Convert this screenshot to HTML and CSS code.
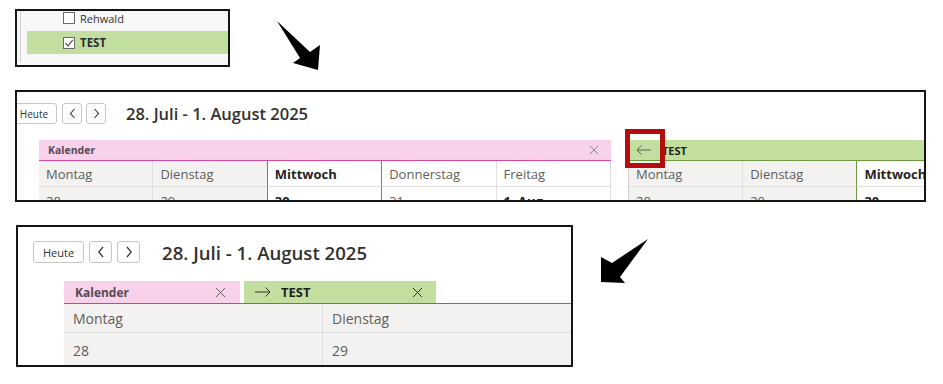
FILE: index.html
```html
<!DOCTYPE html>
<html lang="de">
<head>
<meta charset="utf-8">
<title>Kalender</title>
<link rel="stylesheet" href="styles.css">
</head>
<body>

<div class="shot shot1">
  <div class="nav">
    <div class="list">
      <div class="row"><span class="cb"></span><span>Rehwald</span></div>
      <div class="row sel"><span class="cb"><svg width="10" height="10" viewBox="0 0 10 10"><path d="M1.5 5.2 L4 7.8 L8.8 1.8" fill="none" stroke="#444" stroke-width="1.1"/></svg></span><span class="b">TEST</span></div>
    </div>
  </div>
</div>

<svg class="bigarrow a1" width="56" height="60" viewBox="0 0 56 60"><polygon points="7,6 40,37 50,30 48,55 23,48 30,43" fill="#000"/></svg>

<div class="shot shot2">
  <div class="toolbar t2">
    <button class="btn today">Heute</button>
    <button class="btn nb"><svg width="7" height="11" viewBox="0 0 7 11"><path d="M5.5 1 L1.5 5.5 L5.5 10" fill="none" stroke="#323130" stroke-width="1.1"/></svg></button>
    <button class="btn nb"><svg width="7" height="11" viewBox="0 0 7 11"><path d="M1.5 1 L5.5 5.5 L1.5 10" fill="none" stroke="#323130" stroke-width="1.1"/></svg></button>
    <h1 class="title">28. Juli - 1. August 2025</h1>
  </div>
  <div class="cals">
    <div class="cal pinkcal">
      <div class="bar"><span class="bname">Kalender</span><svg width="10" height="10" viewBox="0 0 10 10"><path d="M1 1L9 9M9 1L1 9" stroke="#8a8886" stroke-width="1"/></svg></div>
      <div class="grid5">
        <div class="c past">Montag</div>
        <div class="c past">Dienstag</div>
        <div class="c now b">Mittwoch</div>
        <div class="c after">Donnerstag</div>
        <div class="c">Freitag</div>
        <div class="d past">28</div>
        <div class="d past">29</div>
        <div class="d now b">30</div>
        <div class="d after">31</div>
        <div class="d b">1. Aug</div>
      </div>
    </div>
    <div class="cal greencal">
      <div class="bar"><svg width="16" height="10" viewBox="0 0 16 10"><path d="M15 5H1M5.5 0.5L1 5L5.5 9.5" fill="none" stroke="#605e5c" stroke-width="1"/></svg><span class="bname">TEST</span></div>
      <div class="grid5">
        <div class="c past">Montag</div>
        <div class="c past">Dienstag</div>
        <div class="c now b">Mittwoch</div>
        <div class="c after">Donnerstag</div>
        <div class="c">Freitag</div>
        <div class="d past">28</div>
        <div class="d past">29</div>
        <div class="d now b">30</div>
        <div class="d after">31</div>
        <div class="d b">1. Aug</div>
      </div>
    </div>
  </div>
  <div class="mark"></div>
</div>

<svg class="bigarrow a2" width="60" height="55" viewBox="0 0 60 55"><polygon points="53,5 17,29 6,23 6,48 30,49 25,43" fill="#000"/></svg>

<div class="shot shot3">
  <div class="toolbar t3">
    <button class="btn today">Heute</button>
    <button class="btn nb"><svg width="8" height="12" viewBox="0 0 8 12"><path d="M6 1 L1.8 6 L6 11" fill="none" stroke="#323130" stroke-width="1.2"/></svg></button>
    <button class="btn nb"><svg width="8" height="12" viewBox="0 0 8 12"><path d="M2 1 L6.2 6 L2 11" fill="none" stroke="#323130" stroke-width="1.2"/></svg></button>
    <h1 class="title">28. Juli - 1. August 2025</h1>
  </div>
  <div class="tabs">
    <div class="tab pinktab"><span class="bname">Kalender</span><svg width="11" height="11" viewBox="0 0 11 11"><path d="M1 1L10 10M10 1L1 10" stroke="#605e5c" stroke-width="1"/></svg></div>
    <div class="tab greentab"><span class="tl"><svg width="16" height="10" viewBox="0 0 16 10"><path d="M0 5H15M10.5 0.5L15 5L10.5 9.5" fill="none" stroke="#323130" stroke-width="1"/></svg><span class="bname">TEST</span></span><svg width="11" height="11" viewBox="0 0 11 11"><path d="M1 1L10 10M10 1L1 10" stroke="#323130" stroke-width="1"/></svg></div>
  </div>
  <div class="grid2">
    <div class="c">Montag</div>
    <div class="c">Dienstag</div>
    <div class="d">28</div>
    <div class="d">29</div>
  </div>
</div>

</body>
</html>
```

FILE: styles.css
```css
* { box-sizing: border-box; margin: 0; padding: 0; }
body {
  margin: 0;
  width: 943px;
  height: 384px;
  position: relative;
  overflow: hidden;
  background: #fff;
  font-family: "Open Sans", "Noto Sans", sans-serif;
  color: #323130;
}
.b { font-weight: 700; }
.shot {
  position: absolute;
  border: 2px solid #151515;
  background: #fff;
  overflow: hidden;
}
.shot1 { left: 15px; top: 9px; width: 215px; height: 58px; background: #f7f7f7; padding-left: 3px; }
.shot2 { left: 15px; top: 90px; width: 911px; height: 112px; padding-top: 11px; }
.shot3 { left: 16px; top: 225px; width: 557px; height: 142px; padding: 14px 0 0 15px; }

.bigarrow { position: absolute; }
.a1 { left: 270px; top: 15px; }
.a2 { left: 595px; top: 234px; }

/* panel 1 */
.nav { height: 100%; border-left: 1px solid #d2d0ce; padding-left: 6px; }
.list { margin-top: -3px; }
.row {
  height: 23px;
  display: flex;
  align-items: center;
  gap: 5px;
  padding-left: 36px;
  font-size: 11px;
  color: #323130;
}
.row:first-child { padding-bottom: 3px; }
.row.sel { background: #c3dfa0; font-size: 11.5px; color: #2b2b2b; }
.cb {
  width: 12px;
  height: 12px;
  border: 1px solid #6b6a68;
  background: #fff;
  display: flex;
  align-items: center;
  justify-content: center;
}

/* toolbars */
.toolbar { display: flex; align-items: center; }
.btn {
  background: #fff;
  border: 1px solid #c8c6c4;
  border-radius: 3px;
  font-family: inherit;
  color: #323130;
  display: flex;
  align-items: center;
  justify-content: center;
}
.title { font-weight: 600; color: #323130; }

.t2 { height: 21px; margin-left: -6px; }
.t2 .btn { height: 21px; }
.t2 .today { width: 46px; font-size: 10px; margin-right: 5px; }
.t2 .nb { width: 20px; margin-right: 4px; }
.t2 .title { font-size: 16.5px; margin-left: 16px; }

.t3 { height: 22px; }
.t3 .btn { height: 22px; }
.t3 .today { width: 51px; font-size: 11px; margin-right: 5px; }
.t3 .nb { width: 23px; margin-right: 5px; }
.t3 .title { font-size: 18.6px; margin-left: 17px; }

/* panel 2 calendars */
.cals { display: flex; margin-top: 16px; padding-left: 22px; }
.cal { width: 572px; flex: none; }
.pinkcal { margin-right: 17px; }
.bar {
  height: 21px;
  display: flex;
  align-items: center;
  font-size: 10.5px;
}
.pinkcal .bar {
  background: #f8d1ea;
  border-bottom: 1px solid #d9469f;
  justify-content: space-between;
  padding: 0 12px 0 9px;
  color: #574a52;
}
.greencal .bar {
  background: #c3dfa0;
  border-bottom: 1px solid #6d9a40;
  padding-left: 8px;
  gap: 10px;
  font-size: 11px;
  color: #1f1f1f;
}
.bname { font-weight: 700; }
.grid5 {
  display: grid;
  grid-template-columns: repeat(5, 1fr);
  grid-template-rows: 26px 30px;
  font-size: 13px;
}
.greencal .grid5 { border-left: 1px solid #d0cecc; }
.grid5 .c, .grid5 .d {
  border-right: 1px solid #e1dfdd;
  padding-left: 7px;
  color: #605e5c;
}
.grid5 .c { display: flex; align-items: center; border-bottom: 1px solid #e1dfdd; }
.grid5 .d { padding-top: 5px; }
.grid5 .past { background: #f3f2f1; }
.grid5 .b { color: #242424; }
.pinkcal .now { border-left: 1px solid #d9469f; border-right: 1px solid #d9469f; margin-left: -1px; }
.greencal .now { border-left: 1px solid #6d9a40; margin-left: -1px; }

.mark {
  position: absolute;
  left: 608px;
  top: 37px;
  width: 40px;
  height: 39px;
  border: 5px solid #b40d0d;
}

/* panel 3 */
.tabs { display: flex; margin: 18px 0 0 31px; gap: 4px; }
.tab {
  height: 22px;
  display: flex;
  align-items: center;
  justify-content: space-between;
  font-size: 12px;
}
.pinktab { width: 176px; background: #f8d1ea; padding: 0 14px 0 11px; color: #574a52; }
.greentab { width: 192px; background: #c3dfa0; padding: 0 13px 0 11px; color: #1f1f1f; font-size: 13px; }
.tl { display: flex; align-items: center; gap: 10px; }
.grid2 {
  margin-left: 31px;
  border-top: 1px solid #5e8c31;
  background: #f3f2f1;
  display: grid;
  grid-template-columns: 259px 1fr;
  grid-template-rows: 29px 34px;
  font-size: 14px;
  color: #605e5c;
}
.grid2 .c, .grid2 .d { display: flex; align-items: center; padding-left: 9px; }
.grid2 .c { border-bottom: 1px solid #e1dfdd; }
.grid2 > div:nth-child(odd) { border-right: 1px solid #e1dfdd; }
```
